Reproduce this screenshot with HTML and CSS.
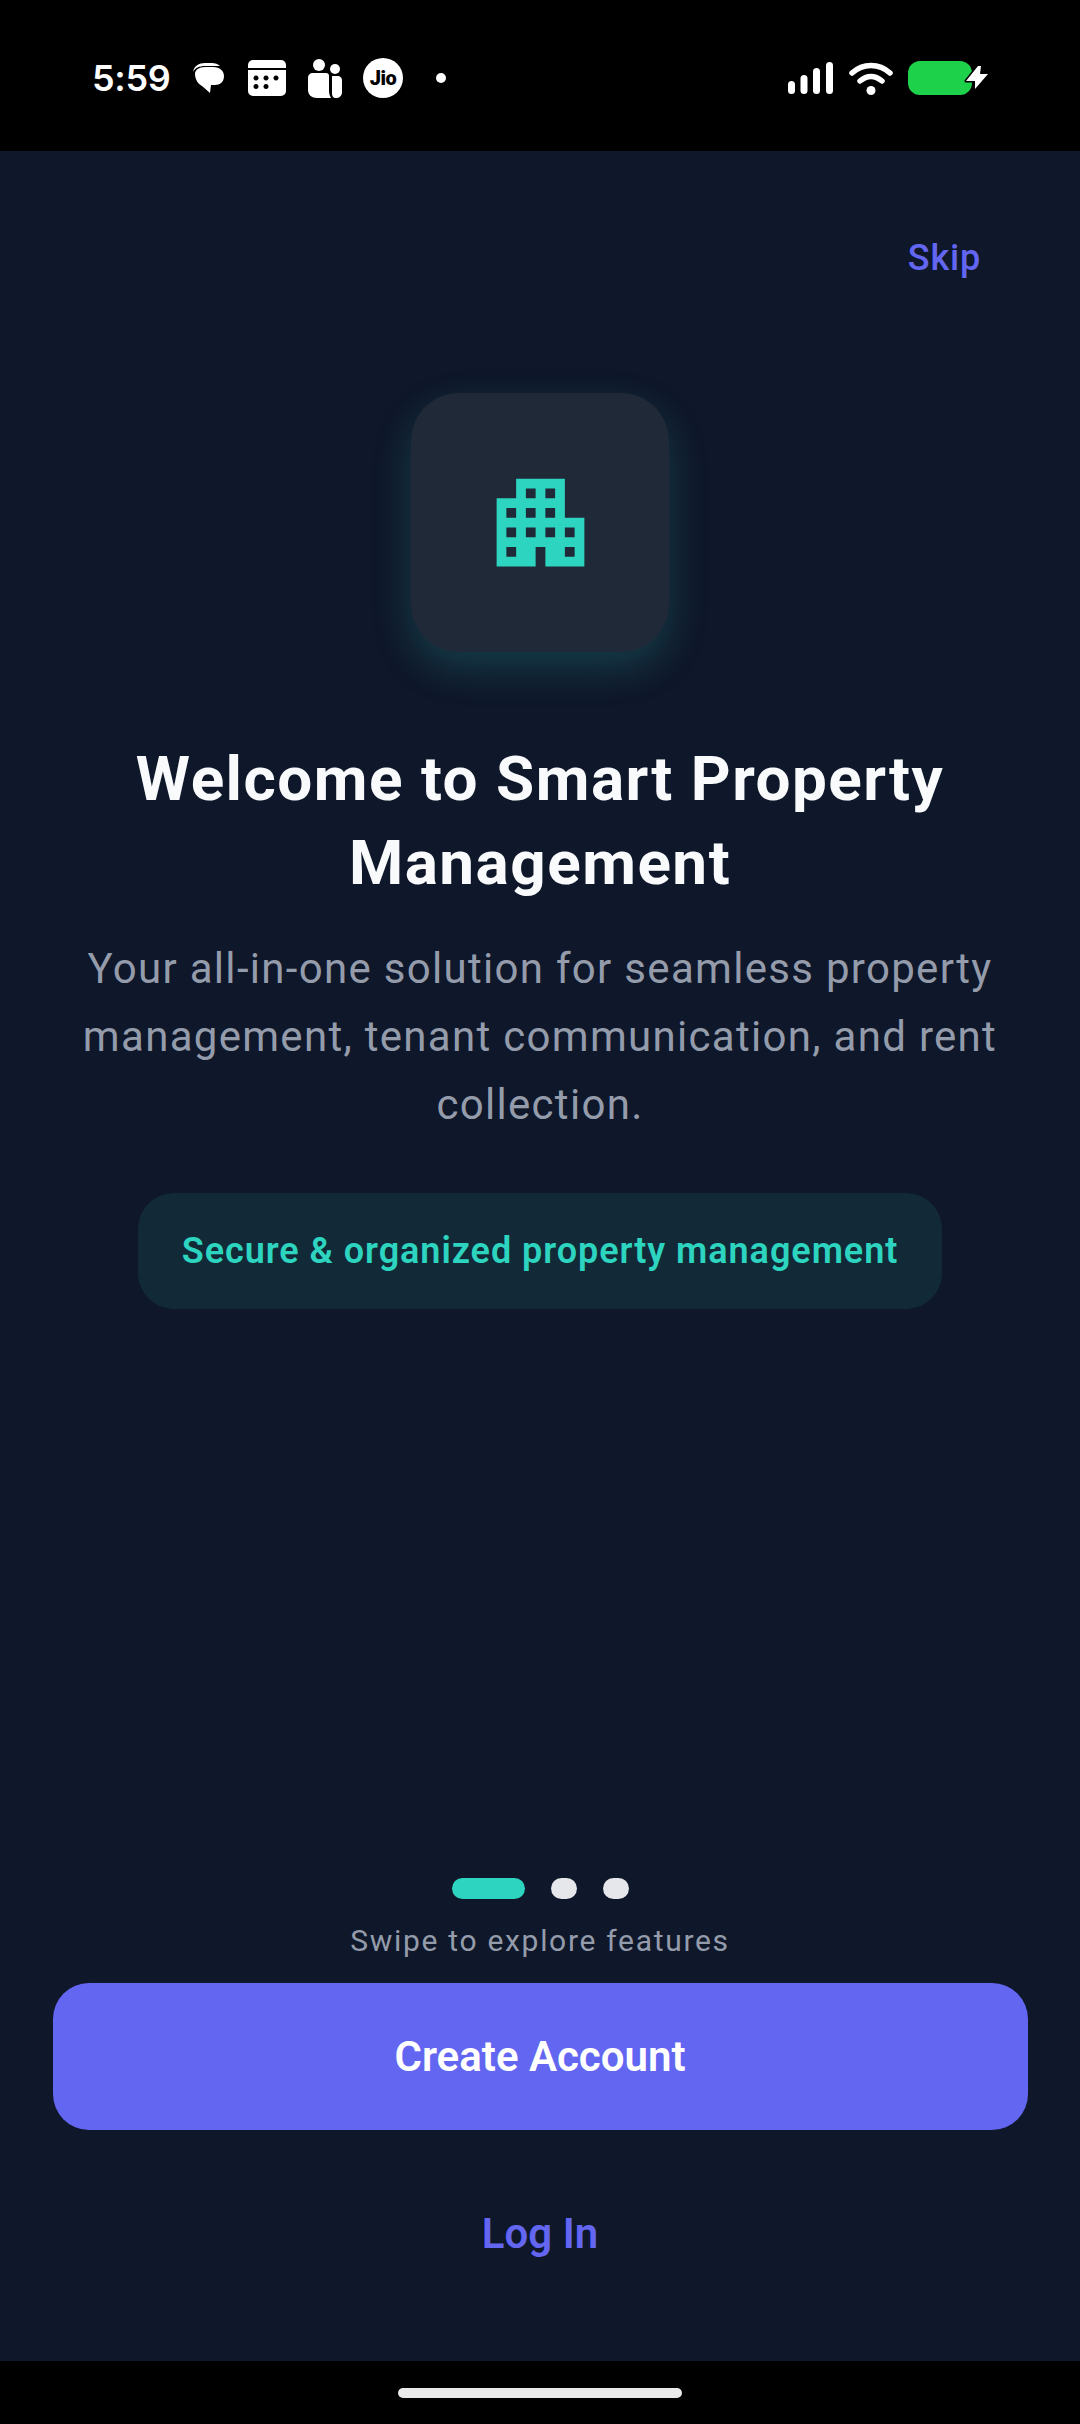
FILE: index.html
```html
<!DOCTYPE html>
<html>
<head>
  <title>Smart Property Management</title>
  <meta charset="utf-8">
  <meta name="viewport" content="width=device-width, initial-scale=1">
  <link rel="stylesheet" href="styles.css">
</head>
<body>

<!-- phone status bar -->
<header class="status-bar">
  <div class="status-left">
    <span class="time">5:59</span>
    <svg class="ic-chat" viewBox="0 0 32 32">
      <path d="M0 9C1 3 6 0 12 0h7c3 0 6 1 8 3H12C6 3 2 5 0 9z" fill="#fff"/>
      <path d="M12 4h8c7 0 11 4 11 9 0 6-4 9-9 9h-4l-1 8-8-7C5 21 2 16 2 11 2 7 6 4 12 4z" fill="#fff"/>
    </svg>
    <svg class="ic-cal" viewBox="0 0 38 36">
      <path d="M5 0h28a5 5 0 0 1 5 5v3H0V5a5 5 0 0 1 5-5z" fill="#fff"/>
      <path fill-rule="evenodd" fill="#fff" d="M0 10h38v21a5 5 0 0 1-5 5H5a5 5 0 0 1-5-5z M8 15.500a2.500 2.500 0 1 0 .01 0z M18 15.500a2.500 2.500 0 1 0 .01 0z M28 15.500a2.500 2.500 0 1 0 .01 0z M8 24a2.500 2.500 0 1 0 .01 0z M18 24a2.500 2.500 0 1 0 .01 0z"/>
    </svg>
    <svg class="ic-people" viewBox="0 0 34 39">
      <circle cx="11" cy="6" r="6" fill="#fff"/>
      <circle cx="27" cy="10" r="5" fill="#fff"/>
      <path d="M5 14h13c2 0 3 1 3 3v15c0 3 1 5 2 7H9c-5 0-9-3-9-8V19c0-3 2-5 5-5z" fill="#fff"/>
      <path d="M25 17h5c2 0 4 2 4 4v12c0 4-3 6-6 6s-4-2-4-5V18c0-1 0-1 1-1z" fill="#fff"/>
    </svg>
    <span class="jio">Jio</span>
    <span class="note-dot"></span>
  </div>
  <div class="status-right">
    <svg class="ic-signal" viewBox="0 0 45 32">
      <rect x="0" y="19" width="7" height="13" rx="3.500" fill="#fff"/>
      <rect x="12.500" y="13" width="7" height="19" rx="3.500" fill="#fff"/>
      <rect x="25" y="6" width="7" height="26" rx="3.500" fill="#fff"/>
      <rect x="38" y="0" width="7" height="32" rx="3.500" fill="#fff"/>
    </svg>
    <svg class="ic-wifi" viewBox="0 0 44 33">
      <path d="M3 11C14 1 30 1 41 11" fill="none" stroke="#fff" stroke-width="5.500" stroke-linecap="round"/>
      <path d="M11 19c7-6 15-6 22 0" fill="none" stroke="#fff" stroke-width="5.500" stroke-linecap="round"/>
      <circle cx="22" cy="28.500" r="4.500" fill="#fff"/>
    </svg>
    <svg class="ic-batt" viewBox="0 0 80 34">
      <rect x="0" y="0" width="64" height="34" rx="12" fill="#1ed14b"/>
      <path d="M70 5 58 20h9v8l13-15h-8l1-8z" fill="#fff" stroke="#000" stroke-width="3" paint-order="stroke" stroke-linejoin="round"/>
    </svg>
  </div>
</header>

<main class="screen">
  <div class="top-row">
    <a class="skip">Skip</a>
  </div>

  <div class="hero">
    <div class="icon-tile">
      <svg class="building" viewBox="0 0 24 24">
        <path d="M17 11V3H7v4H3v14h8v-4h2v4h8V11h-4zM7 19H5v-2h2v2zm0-4H5v-2h2v2zm0-4H5V9h2v2zm4 4H9v-2h2v2zm0-4H9V9h2v2zm0-4H9V5h2v2zm4 8h-2v-2h2v2zm0-4h-2V9h2v2zm0-4h-2V5h2v2zm4 12h-2v-2h2v2zm0-4h-2v-2h2v2z"/>
      </svg>
    </div>
    <h1>Welcome to Smart Property Management</h1>
    <p class="intro">Your all-in-one solution for seamless property management, tenant communication, and rent collection.</p>
    <div class="pill">Secure &amp; organized property management</div>
  </div>

  <div class="bottom">
    <div class="dots">
      <span class="dot dot-on"></span>
      <span class="dot"></span>
      <span class="dot"></span>
    </div>
    <div class="swipe">Swipe to explore features</div>
    <button class="btn-create">Create Account</button>
    <button class="btn-login">Log In</button>
  </div>
</main>

<footer class="nav-bar">
  <span class="home-bar"></span>
</footer>

</body>
</html>
```

FILE: styles.css
```css
* {
  box-sizing: border-box;
}

html, body {
  margin: 0;
  height: 100%;
}

body {
  width: 1080px;
  height: 2424px;
  display: flex;
  flex-direction: column;
  background: #000;
  font-family: Roboto, "Liberation Sans", sans-serif;
  overflow: hidden;
}

/* status bar */
.status-bar {
  height: 151px;
  flex: none;
  display: flex;
  justify-content: space-between;
  align-items: flex-start;
  padding: 58px 92px 0 92px;
  background: #000;
  color: #fff;
}

.status-left, .status-right {
  display: flex;
  align-items: center;
  height: 40px;
}

.time {
  font-family: Inter, Roboto, sans-serif;
  font-size: 36px;
  font-weight: 600;
  line-height: 40px;
  width: 76px;
  letter-spacing: -0.3px;
}

.ic-chat { width: 32px; height: 32px; margin-left: 25px; margin-top: 2px; }
.ic-cal { width: 38px; height: 36px; margin-left: 23px; }
.ic-people { width: 34px; height: 39px; margin-left: 22px; }

.jio {
  width: 40px;
  height: 40px;
  margin-left: 21px;
  border-radius: 50%;
  background: #fff;
  color: #000;
  font-size: 20px;
  font-weight: 900;
  line-height: 40px;
  text-align: center;
  letter-spacing: -0.5px;
}

.note-dot {
  width: 10px;
  height: 10px;
  margin-left: 33px;
  border-radius: 50%;
  background: #fff;
}

.ic-signal { width: 45px; height: 32px; }
.ic-wifi { width: 44px; height: 33px; margin-left: 16px; }
.ic-batt { width: 80px; height: 34px; margin-left: 15px; }

/* main screen */
.screen {
  flex: 1;
  display: flex;
  flex-direction: column;
  background: #0f172a;
}

.top-row {
  display: flex;
  justify-content: flex-end;
  padding: 85px 99px 0 0;
}

.skip {
  font-size: 36px;
  font-weight: 500;
  line-height: 44px;
  letter-spacing: 0.8px;
  color: #6366f1;
}

.hero {
  display: flex;
  flex-direction: column;
  align-items: center;
  padding: 113px 52px 0;
  text-align: center;
}

.icon-tile {
  width: 258px;
  height: 259px;
  display: flex;
  align-items: center;
  justify-content: center;
  background: #1f2937;
  border-radius: 48px;
  box-shadow: 0 16px 40px rgba(45, 212, 191, 0.2);
}

.building {
  width: 117px;
  height: 117px;
  fill: #2dd4bf;
}

h1 {
  margin: 85px 0 0;
  width: 900px;
  font-size: 62px;
  font-weight: 700;
  line-height: 84px;
  letter-spacing: 1.5px;
  color: #f8fafc;
}

.intro {
  margin: 30px 0 0;
  width: 960px;
  font-size: 42px;
  font-weight: 400;
  line-height: 68px;
  letter-spacing: 1.3px;
  color: #949cab;
}

.pill {
  margin-top: 54px;
  width: 804px;
  height: 116px;
  display: flex;
  align-items: center;
  justify-content: center;
  background: rgba(45, 212, 191, 0.1);
  border-radius: 36px;
  font-size: 36px;
  font-weight: 600;
  letter-spacing: 0.95px;
  color: #2dd4bf;
}

.bottom {
  margin-top: auto;
  display: flex;
  flex-direction: column;
  align-items: center;
  padding: 0 52px;
}

.dots {
  display: flex;
  gap: 26px;
}

.dot {
  width: 26px;
  height: 21px;
  border-radius: 11px;
  background: #e5e7eb;
}

.dot-on {
  width: 73px;
  background: #2dd4bf;
}

.swipe {
  margin-top: 22px;
  font-size: 30px;
  line-height: 40px;
  letter-spacing: 1.7px;
  color: #949cab;
}

.btn-create {
  margin-top: 22px;
  width: 975px;
  height: 147px;
  border: 0;
  border-radius: 36px;
  background: #6366f1;
  color: #fff;
  font-family: inherit;
  font-size: 42px;
  font-weight: 600;
}

.btn-login {
  margin: 73px 0 98px;
  height: 60px;
  border: 0;
  background: none;
  color: #6366f1;
  font-family: inherit;
  font-size: 42px;
  font-weight: 600;
}

/* bottom gesture area */
.nav-bar {
  height: 63px;
  flex: none;
  display: flex;
  justify-content: center;
  padding-top: 27px;
  background: #000;
}

.home-bar {
  width: 284px;
  height: 10px;
  border-radius: 5px;
  background: #e9e9e9;
}
```
